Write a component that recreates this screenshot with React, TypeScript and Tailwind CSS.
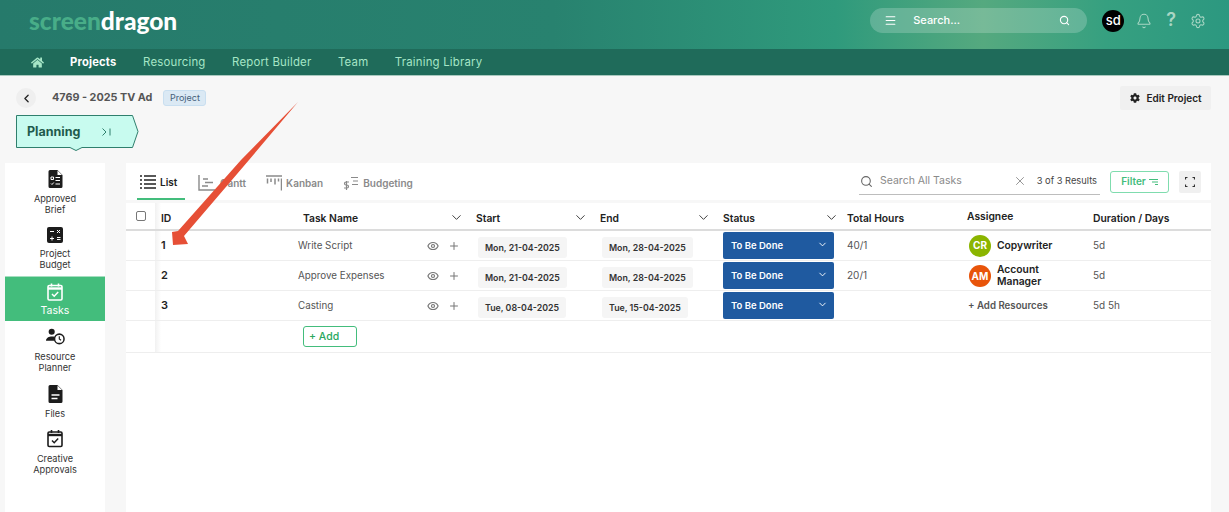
import { ChevronDown, ChevronLeft, Eye, Menu, Plus, Search, X, Bell, Settings } from "lucide-react";
import { FaHome, FaCog } from "react-icons/fa";

const navItems = ["Resourcing", "Report Builder", "Team", "Training Library"];

const rows = [
  { id: 1, name: "Write Script", start: "Mon, 21-04-2025", end: "Mon, 28-04-2025", hours: "40/1", duration: "5d" },
  { id: 2, name: "Approve Expenses", start: "Mon, 21-04-2025", end: "Mon, 28-04-2025", hours: "20/1", duration: "5d" },
  { id: 3, name: "Casting", start: "Tue, 08-04-2025", end: "Tue, 15-04-2025", hours: "", duration: "5d 5h" },
];

const gridCols = "grid grid-cols-[29px_143px_173px_124px_123px_128px_121px_126px_1fr]";
const shadowCell = "bg-[linear-gradient(90deg,#f1f1f1,#ffffff_6px)]";

const CalendarIcon = ({ className }: { className?: string }) => (
  <svg viewBox="0 0 16 18" className={className} fill="none" stroke="currentColor">
    <rect x="1" y="2.5" width="14" height="14.5" rx="1.2" strokeWidth="1.6" />
    <path d="M1 5.5h14" strokeWidth="2.4" />
    <path d="M4.500 0.5v3M11.500 0.5v3" strokeWidth="1.6" />
    <path d="M5 11l2.200 2.200L11.200 9" strokeWidth="1.5" />
  </svg>
);

const DocIcon = ({ lines }: { lines?: boolean }) => (
  <svg viewBox="0 0 14 18" className="h-[18px] w-[15px] text-[#1c1c1c]" fill="currentColor">
    <path d="M1.500 0H9l5 5v11.500a1.500 1.500 0 0 1-1.500 1.500h-11A1.500 1.500 0 0 1 0 16.500v-15A1.500 1.500 0 0 1 1.500 0z" />
    <path d="M9 0.5V5h4.500" fill="#fff" />
    {lines ? (
      <path d="M3 10h8M3 13.500h6" stroke="#fff" strokeWidth="1.5" />
    ) : (
      <path d="M7 7.500h4.500M7 10.500h4.500M7 14h4.500M2.500 7h2.500v2.500H2.500zM2.500 13.500l1 1 1.800-2" stroke="#fff" strokeWidth="1" fill="none" />
    )}
  </svg>
);

const SideItem = ({ label, icon, active, className }: { label: string[]; icon: React.ReactNode; active?: boolean; className?: string }) => (
  <div className={`flex flex-col items-center text-center text-[9.2px] leading-[11px] ${active ? "bg-[#43bd7c] text-white h-[45px] mt-[6px] pt-[6px] gap-[4px] border-t border-[#a5dfc0]" : "text-[#333]"} ${className ?? ""}`}>
    {icon}
    <div className={active ? "text-[10.5px]" : "mt-[5px]"}>
      {label.map((l) => (
        <div key={l}>{l}</div>
      ))}
    </div>
  </div>
);

const Sidebar = () => (
  <aside className="w-[100px] h-[349px] bg-white shrink-0 pt-[7px]">
    <SideItem label={["Approved", "Brief"]} icon={<DocIcon />} />
    <SideItem
      className="mt-[12px]"
      label={["Project", "Budget"]}
      icon={
        <svg viewBox="0 0 16 16" className="h-[16px] w-[16px]">
          <rect width="16" height="16" rx="2" fill="#1c1c1c" />
          <path d="M3 4.500h4M10 3l3 3M13 3l-3 3M3 11.500h4M5 9.500v4M10 10.500h3.500M10 12.500h3.500" stroke="#fff" strokeWidth="1" />
        </svg>
      }
    />
    <SideItem label={["Tasks"]} active icon={<CalendarIcon className="h-[18px] w-[16px]" />} />
    <SideItem
      className="mt-[7px] pb-[1px]"
      label={["Resource", "Planner"]}
      icon={
        <svg viewBox="0 0 20 17" className="h-[17px] w-[19px] mb-[1px] text-[#1c1c1c]" fill="currentColor">
          <circle cx="6" cy="3.500" r="3.200" />
          <path d="M0 13c0-3 3-4.500 6.500-4.500 1 0 2 .1 2.500.4A6 6 0 0 0 8.500 13z" />
          <circle cx="14" cy="11" r="5" fill="none" stroke="currentColor" strokeWidth="1.6" />
          <path d="M14 8.300V11l1.800 1.400" fill="none" stroke="currentColor" strokeWidth="1.2" />
        </svg>
      }
    />
    <SideItem className="mt-[11px]" label={["Files"]} icon={<DocIcon lines />} />
    <SideItem className="mt-[10px]" label={["Creative", "Approvals"]} icon={<CalendarIcon className="h-[19px] w-[16px] text-[#1c1c1c]" />} />
  </aside>
);

const Tabs = () => (
  <div className="flex items-center h-[37px] pl-[11px] pr-[10px] bg-white">
    <div className="flex items-center gap-[4px] h-[37px] w-[48px] border-b-2 border-[#43bd7c] pl-[3px] pt-[3px] text-[10px] font-semibold text-[#222]">
      <svg viewBox="0 0 16 14" className="h-[14px] w-[16px] shrink-0 text-[#222]" stroke="currentColor" strokeWidth="1.6">
        <path d="M0 1h2M4 1h12M0 5h2M4 5h12M0 9h2M4 9h12M0 13h2M4 13h12" />
      </svg>
      List
    </div>
    <div className="flex items-center gap-[5px] ml-[13px] pt-[3px] text-[10px] font-semibold text-[#8a8a8a]">
      <svg viewBox="0 0 17 16" className="h-[16px] w-[17px]" fill="none" stroke="#8a8a8a" strokeWidth="1.4">
        <path d="M1 0v15h16M5 4h5M7 7.500h8M4 11h6" />
      </svg>
      Gantt
    </div>
    <div className="flex items-center gap-[4px] ml-[20px] pt-[3px] text-[10px] font-semibold text-[#8a8a8a]">
      <svg viewBox="0 0 16 16" className="h-[16px] w-[16px]" fill="none" stroke="#8a8a8a" strokeWidth="1.5">
        <path d="M0 1h16M1.500 3.500v5M5 3.500v3.500M9 3.500v6M12.500 3.500v3M15.500 3.500v12" />
      </svg>
      Kanban
    </div>
    <div className="flex items-center gap-[4px] ml-[20px] pt-[3px] text-[10px] font-semibold text-[#8a8a8a]">
      <svg viewBox="0 0 16 16" className="h-[16px] w-[16px]" fill="none" stroke="#8a8a8a" strokeWidth="1.2">
        <path d="M6 7H3a1 1 0 0 0 0 3h1a1 1 0 0 1 0 3H1M3.500 6v9M8 2.500h7M10 6h5M9 9.500h6" />
      </svg>
      Budgeting
    </div>
    <div className="ml-auto flex items-center">
      <div className="flex items-center w-[241px] h-[27px] border-b border-[#bdbdbd] text-[#8a8a8a]">
        <Search className="h-[13px] w-[13px] text-[#666] ml-[1px]" />
        <span className="ml-[7px] text-[10.5px] flex-1">Search All Tasks</span>
        <X className="h-[14px] w-[14px] text-[#888]" strokeWidth={1.5} />
        <span className="ml-[10px] mr-[3px] text-[9.3px] text-[#444]">3 of 3 Results</span>
      </div>
      <div className="ml-[10px] flex items-center justify-center gap-[3px] w-[59px] h-[22px] border border-[#7fdcae] rounded-[3px] text-[10px] font-semibold text-[#43bd7c]">
        Filter
        <svg viewBox="0 0 9 6" className="w-[9px] h-[6px]" stroke="#43bd7c" fill="none">
          <path d="M0 .5h9M3 3h6M6 5.500h3" />
        </svg>
      </div>
      <div className="ml-[10px] flex items-center justify-center w-[22px] h-[22px] rounded-[2px] bg-[#f0f0f0]">
        <svg viewBox="0 0 10 10" className="h-[10px] w-[10px]" fill="none" stroke="#333" strokeWidth="1.2">
          <path d="M.5 2.500V.5h2M7.500.5h2v2M.5 7.500v2h2M7.500 9.500h2v-2" />
        </svg>
      </div>
    </div>
  </div>
);

const HeadCell = ({ label, chevron, pad }: { label: string; chevron?: boolean; pad?: string }) => (
  <div className={`flex items-center justify-between h-full pt-[6px] text-[10.3px] font-semibold text-[#222] ${pad ?? "pl-[5px]"} pr-[7px]`}>
    <span>{label}</span>
    {chevron && <ChevronDown className="h-[15px] w-[15px] text-[#333] -mt-[4px]" strokeWidth={1.5} />}
  </div>
);

const DateChip = ({ text }: { text: string }) => (
  <div className="inline-flex items-center justify-center h-[21px] px-[7px] mt-[2px] rounded-[3px] bg-[#f5f5f5] text-[8.8px] font-semibold text-[#333] whitespace-nowrap">
    {text}
  </div>
);

const Assignee = ({ id }: { id: number }) => {
  if (id === 1)
    return (
      <div className="flex items-center gap-[6px] pl-[2px] text-[10.3px] font-semibold text-[#222]">
        <div className="flex items-center justify-center w-[22px] h-[22px] rounded-full bg-[#8bb500] text-white text-[10px] font-bold">CR</div>
        Copywriter
      </div>
    );
  if (id === 2)
    return (
      <div className="flex items-center gap-[6px] pl-[2px] text-[10.3px] leading-[12px] font-semibold text-[#222]">
        <div className="flex items-center justify-center w-[22px] h-[22px] rounded-full bg-[#e8540a] text-white text-[10px] font-bold">AM</div>
        <div className="-mt-[1px]">
          Account
          <br />
          Manager
        </div>
      </div>
    );
  return <div className="pl-[1px] pt-[1px] text-[9.7px] font-semibold text-[#555]">+ Add Resources</div>;
};

const TaskTable = () => (
  <div className="bg-white relative">
    <div className={`${gridCols} h-[28px] border-b-2 border-[#dcdcdc]`}>
      <div className="pt-[8px] pl-[10px]">
        <div className="w-[10px] h-[10px] border border-[#777] rounded-[2px]" />
      </div>
      <HeadCell label="ID" pad={`pl-[6px] ${shadowCell}`} />
      <HeadCell label="Task Name" chevron />
      <HeadCell label="Start" chevron />
      <HeadCell label="End" chevron />
      <HeadCell label="Status" chevron />
      <HeadCell label="Total Hours" pad="pl-[1px]" />
      <div className="pt-[6px] text-[10.3px] font-semibold text-[#222]">Assignee</div>
      <HeadCell label="Duration / Days" pad="pl-0" />
    </div>
    {rows.map((r) => (
      <div key={r.id} className={`${gridCols} h-[30px] items-center border-b border-[#eeeeee]`}>
        <div />
        <div className={`flex items-center h-full pl-[6px] text-[11px] font-semibold text-[#222] ${shadowCell}`}>{r.id}</div>
        <div className="flex items-center h-full text-[9.8px] text-[#555]">
          <span className="flex-1 pt-[1px]">{r.name}</span>
          <Eye className="h-[12px] w-[12px] text-[#777] mr-[9px]" strokeWidth={2.4} />
          <Plus className="h-[12px] w-[12px] text-[#777] mr-[11px]" strokeWidth={2} />
        </div>
        <div className="pl-[7px]">
          <DateChip text={r.start} />
        </div>
        <div className="pl-[7px]">
          <DateChip text={r.end} />
        </div>
        <div className="h-full flex items-center pl-[5px]">
          <div className="flex items-center justify-between w-[111px] h-[27px] pl-[8px] pr-[6px] rounded-[2px] bg-[#1f5aa0] text-[9.5px] font-semibold text-white">
            <span className="pt-[1px]">To Be Done</span>
            <ChevronDown className="h-[11px] w-[11px] -mt-[2px]" strokeWidth={2} />
          </div>
        </div>
        <div className="pl-[1px] text-[10px] text-[#555]">{r.hours}</div>
        <Assignee id={r.id} />
        <div className="text-[10px] text-[#555]">{r.duration}</div>
      </div>
    ))}
    <div className={`${gridCols} h-[32px] items-center border-b border-[#eeeeee]`}>
      <div />
      <div className={`h-full ${shadowCell}`} />
      <div className="col-span-7 pl-[5px]">
        <div className="flex items-center w-[54px] h-[21px] pl-[5px] border border-[#43bd7c] rounded-[3px] text-[10.5px] font-medium text-[#2aa860]">
          + Add
        </div>
      </div>
    </div>
  </div>
);

export default function App() {
  return (
    <div className="relative w-[1229px] h-[512px] overflow-hidden bg-[#f7f7f7] font-['Inter',sans-serif]">
      <header className="flex items-start h-[49px] pt-[8px] pl-[29px] pr-[23px] bg-[linear-gradient(90deg,#267a6b_0%,#28826f_45%,#2f9a7c_68%,#55a97f_80%,#36a080_90%,#2c9880_100%)]">
        <div className="relative text-[24.500px] font-black leading-[26px] font-['Lato',sans-serif]">
          <span className="text-[#48ad88]">screen</span>
          <span className="text-white">dragon</span>
          <span className="absolute left-[127px] top-[12px] w-[3px] h-[3px] rounded-full bg-[#2a6a5a]" />
        </div>
        <div className="ml-auto flex items-center">
          <div className="flex items-center w-[217px] h-[25px] rounded-full bg-white/20 pl-[14px] pr-[17px] text-white">
            <Menu className="h-[13px] w-[13px]" strokeWidth={2} />
            <span className="ml-[16px] flex-1 text-[11px] font-medium">Search...</span>
            <Search className="h-[11px] w-[11px]" strokeWidth={2.4} />
          </div>
          <div className="ml-[15px] flex items-center justify-center w-[22px] h-[22px] rounded-full bg-black text-white text-[13px] font-medium leading-none">sd</div>
          <Bell className="ml-[12px] h-[16px] w-[16px] text-[#a9d6c4]" strokeWidth={1.6} />
          <span className="ml-[14px] text-[18px] font-semibold leading-none text-[#a9d6c4] -mt-[2px]">?</span>
          <Settings className="ml-[14px] h-[16px] w-[16px] text-[#a9d6c4]" strokeWidth={1.6} />
        </div>
      </header>

      <nav className="flex items-center h-[27px] pl-[31px] pt-[1px] bg-[#1f6b5a] border-b border-[#a9c9bf] text-[11.400px] text-[#a5e6c6] tracking-[0.2px]">
        <FaHome className="h-[13px] w-[13px] text-[#a5e6c6]" />
        <span className="ml-[26px] font-bold text-[11.200px] text-white">Projects</span>
        {navItems.map((n) => (
          <span key={n} className="ml-[26.500px]">
            {n}
          </span>
        ))}
      </nav>

      <div className="flex items-center h-[39px] pl-[16px] pr-[18px] pt-[5px]">
        <div className="flex items-center justify-center w-[20px] h-[20px] rounded-full bg-[#efefef]">
          <ChevronLeft className="h-[13px] w-[13px] text-[#222]" strokeWidth={2.4} />
        </div>
        <span className="ml-[16px] text-[10.800px] font-bold text-[#555]">4769 - 2025 TV Ad</span>
        <span className="ml-[11px] flex items-center justify-center w-[43px] h-[16px] rounded-[3px] border border-[#c9dff0] bg-[#dbe9f4] text-[9px] text-[#45607a]">
          Project
        </span>
        <div className="ml-auto flex items-center justify-center gap-[6px] w-[91px] h-[24px] pl-[1px] rounded-[2px] bg-[#f0f0f0] text-[10px] font-semibold text-[#222]">
          <FaCog className="h-[10px] w-[10px]" />
          Edit Project
        </div>
      </div>

      <div className="relative ml-[16px] w-[123px] h-[36px]">
        <svg viewBox="0 0 123 36" className="absolute inset-0 h-full w-full">
          <path d="M.5.5H116.500L122 16.500L116.500 32.500H66L60 35.500L54 32.500H.5Z" fill="#c8fbef" stroke="#2f7f6d" />
        </svg>
        <div className="relative flex items-center h-[33px] pl-[11px] pt-[1px] text-[12.500px] font-bold text-[#1f5a4c]">
          Planning
          <span className="ml-[22px] flex items-center text-[#2f7f6d]">
            <svg viewBox="0 0 9 8" className="w-[9px] h-[8px]" fill="none" stroke="currentColor">
              <path d="M.5.5L4 4L.5 7.500M8 .5v7" />
            </svg>
          </span>
        </div>
      </div>

      <div className="flex mt-[12px] ml-[5px] gap-[21px]">
        <Sidebar />
        <main className="w-[1085px] h-[349px] bg-white">
          <Tabs />
          <div className="h-[3px] bg-[#f7f7f7]" />
          <TaskTable />
        </main>
      </div>

      <svg className="absolute left-0 top-0 pointer-events-none" width="1229" height="512">
        <polygon points="298,102 249,160 184,236 188,244 173,245 172,232 178,231 241,160" fill="#e64f36" />
      </svg>
    </div>
  );
}
